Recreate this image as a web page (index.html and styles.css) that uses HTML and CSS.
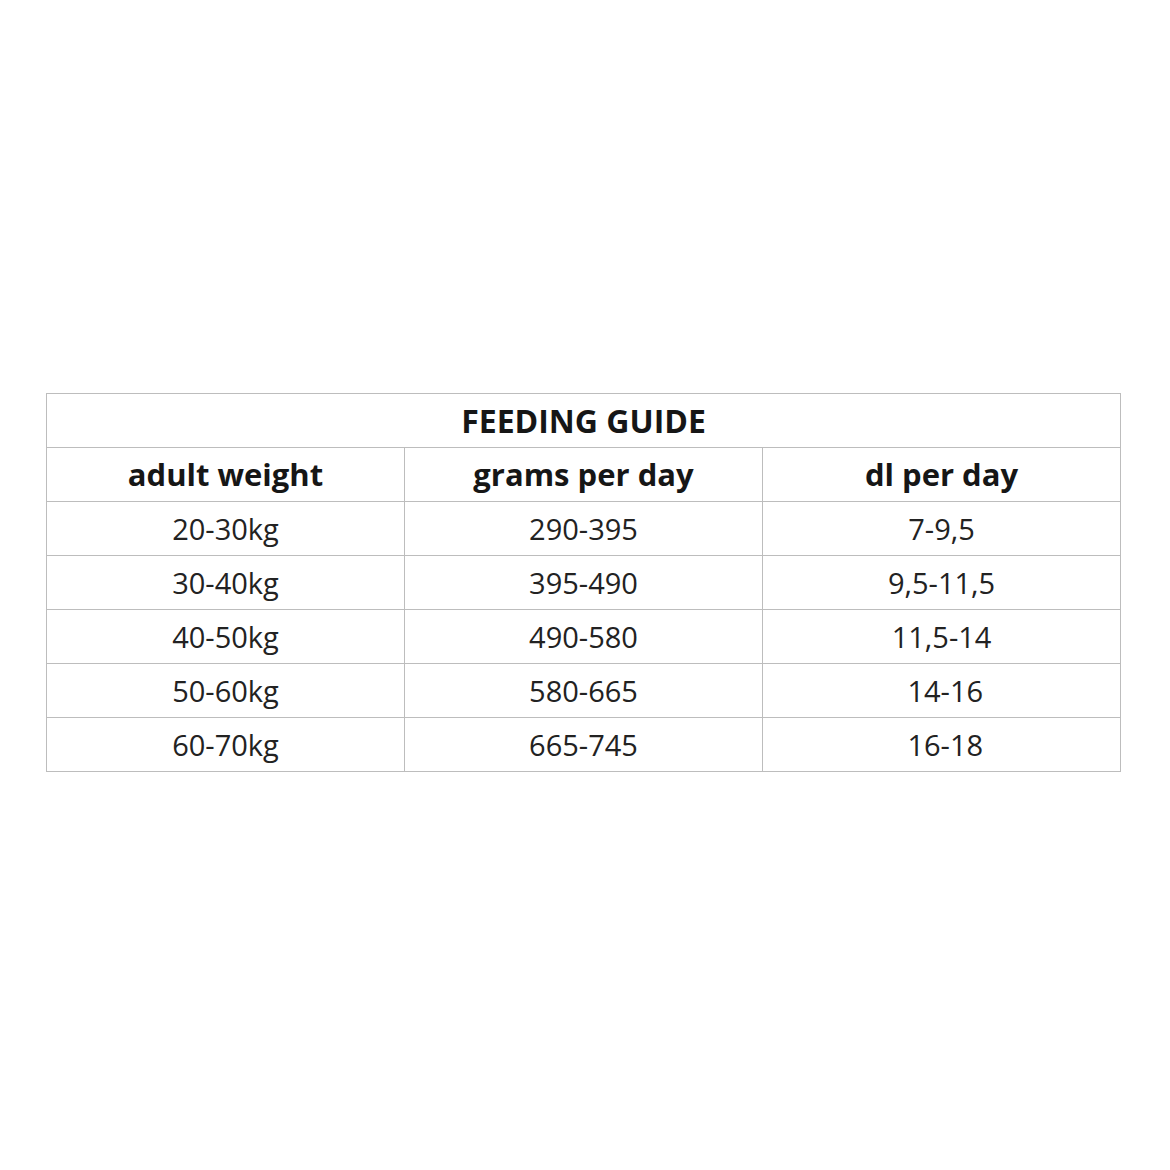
FILE: index.html
```html
<!DOCTYPE html>
<html>
<head>
<meta charset="utf-8">
<link rel="stylesheet" href="styles.css">
</head>
<body>
<div class="page">
  <table class="guide">
    <colgroup><col class="c"><col class="c"><col class="c"></colgroup>
    <tr><th class="title" colspan="3">FEEDING GUIDE</th></tr>
    <tr><th>adult weight</th><th>grams per day</th><th>dl per day</th></tr>
    <tr><td>20-30kg</td><td>290-395</td><td>7-9,5</td></tr>
    <tr><td>30-40kg</td><td>395-490</td><td>9,5-11,5</td></tr>
    <tr><td>40-50kg</td><td>490-580</td><td>11,5-14</td></tr>
    <tr><td>50-60kg</td><td>580-665</td><td>&nbsp;14-16</td></tr>
    <tr><td>60-70kg</td><td>665-745</td><td>&nbsp;16-18</td></tr>
  </table>
</div>
</body>
</html>
```

FILE: styles.css
```css
html, body {
  margin: 0;
  padding: 0;
  background: #ffffff;
}
.page {
  padding: 393px 0 0 46px;
}
.guide {
  border-collapse: collapse;
  table-layout: fixed;
  width: 1075px;
  font-family: "Open Sans", "Liberation Sans", sans-serif;
  color: #222222;
}
.guide .c {
  width: 358px;
}
.guide th,
.guide td {
  border: 1px solid #bdbdbd;
  height: 53px;
  padding: 0;
  text-align: center;
  vertical-align: middle;
  line-height: 1;
}
.guide th {
  font-weight: 700;
  font-size: 31px;
  color: #161616;
}
.guide th.title {
  font-size: 32px;
}
.guide td {
  font-size: 29px;
  font-weight: 400;
}
```
